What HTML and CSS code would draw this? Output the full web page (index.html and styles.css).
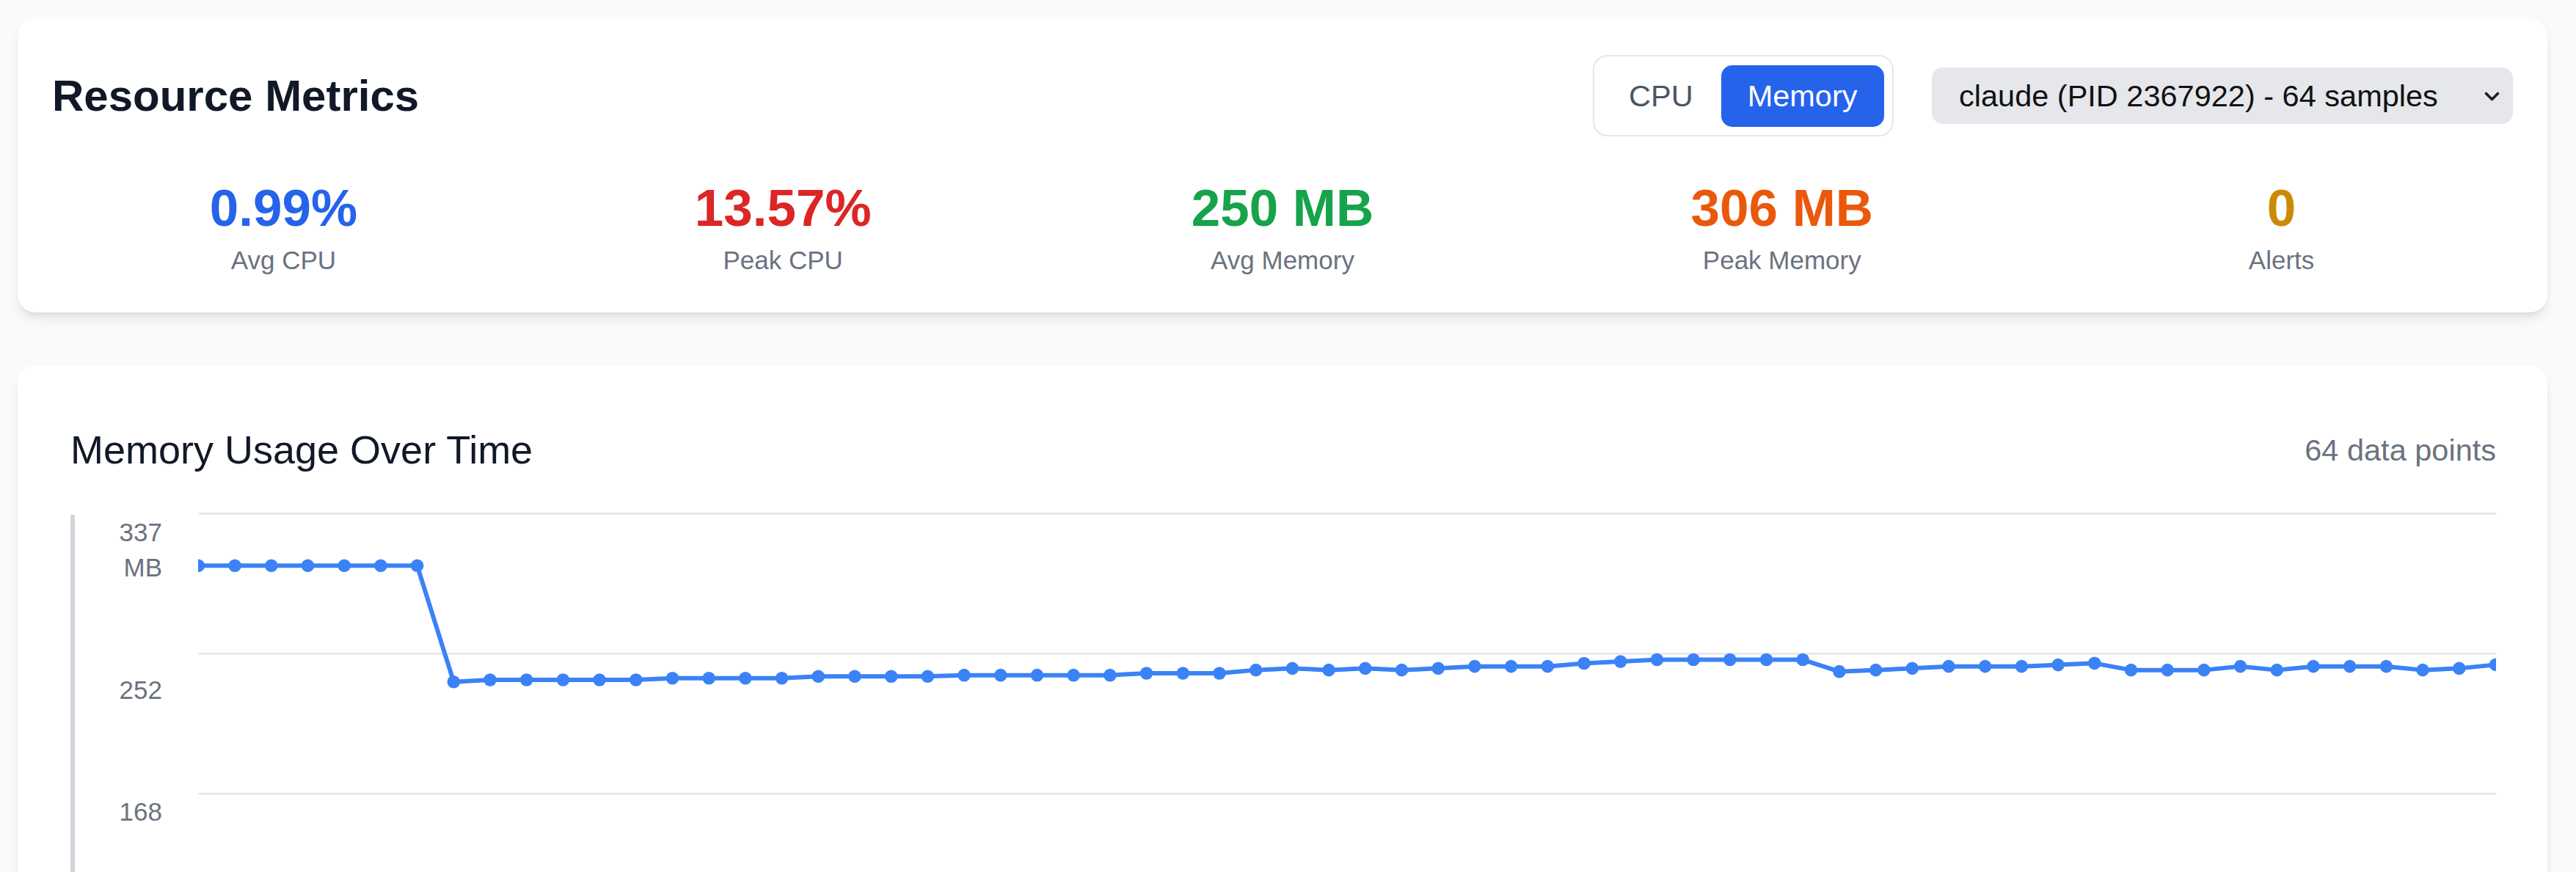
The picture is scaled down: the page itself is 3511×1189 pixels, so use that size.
FILE: index.html
```html
<!DOCTYPE html>
<html lang="en">

<head>
  <meta charset="UTF-8">
  <meta name="viewport" content="width=device-width, initial-scale=1.0">
  <title>Resource Metrics</title>
  <link rel="stylesheet" href="styles.css">
</head>

<body>
  <div class="page">
    <section class="card metrics-card">
      <div class="metrics-head">
        <h1 class="metrics-title">Resource Metrics</h1>
        <div class="controls">
          <div class="toggle">
            <button>CPU</button>
            <button class="active">Memory</button>
          </div>
          <div class="picker">
            <select>
              <option>claude (PID 2367922) - 64 samples</option>
            </select>
            <svg width="21" height="13" viewBox="0 0 21 13">
              <path d="M2.5 2.5 L10.5 10.5 L18.5 2.5" fill="none" stroke="#1f1f1f" stroke-width="3.6" stroke-linecap="round" stroke-linejoin="round" />
            </svg>
          </div>
        </div>
      </div>
      <div class="stats">
        <div class="stat">
          <div class="stat-value blue">0.99%</div>
          <div class="stat-label">Avg CPU</div>
        </div>
        <div class="stat">
          <div class="stat-value red">13.57%</div>
          <div class="stat-label">Peak CPU</div>
        </div>
        <div class="stat">
          <div class="stat-value green">250 MB</div>
          <div class="stat-label">Avg Memory</div>
        </div>
        <div class="stat">
          <div class="stat-value orange">306 MB</div>
          <div class="stat-label">Peak Memory</div>
        </div>
        <div class="stat">
          <div class="stat-value amber">0</div>
          <div class="stat-label">Alerts</div>
        </div>
      </div>
    </section>

    <section class="card chart-card">
      <div class="chart-head">
        <h2 class="chart-title">Memory Usage Over Time</h2>
        <span class="chart-count">64 data points</span>
      </div>
      <div class="chart-body">
        <div class="y-axis">
          <span>337 MB</span>
          <span>252</span>
          <span>168</span>
        </div>
        <svg class="plot" id="plot" width="3132" height="770"></svg>
      </div>
    </section>
  </div>

  <script>
    // memory samples in MB, one per sample
    const samples = [
      305.7, 305.7, 305.7, 305.7, 305.7, 305.7, 305.7,
      235.8, 237.0, 237.0, 237.0, 237.0, 237.0,
      238.0, 238.0, 238.0, 238.0,
      239.1, 239.1, 239.1, 239.1,
      239.8, 239.8, 239.8, 239.8, 239.8,
      241.0, 241.0, 241.0,
      242.9, 243.9, 242.9, 243.9, 242.9, 243.9,
      245.1, 245.1, 245.1, 246.9, 248.0,
      249.1, 249.1, 249.1, 249.1, 249.1,
      242.0, 242.9, 243.9, 245.1, 245.1, 245.1, 246.0, 247.0,
      242.9, 242.9, 242.9, 245.1, 242.9,
      245.1, 245.1, 245.1, 242.9, 243.9, 246.1
    ]
    const ns = 'http://www.w3.org/2000/svg'
    const plot = document.getElementById('plot')
    const maxMb = 337
    const padTop = 2.3
    const rowH = 191
    const stepX = 49.7
    const yOf = v => padTop + (maxMb - v) / (maxMb / 4) * rowH
    const xOf = i => 0.4 + i * stepX

    for (let i = 0; i <= 4; i++) {
      const line = document.createElementNS(ns, 'line')
      const y = padTop + i * rowH
      line.setAttribute('x1', 0)
      line.setAttribute('x2', 3132)
      line.setAttribute('y1', y)
      line.setAttribute('y2', y)
      line.setAttribute('class', 'grid')
      plot.appendChild(line)
    }

    const path = document.createElementNS(ns, 'polyline')
    path.setAttribute('points', samples.map((v, i) => `${xOf(i)},${yOf(v)}`).join(' '))
    path.setAttribute('class', 'series')
    plot.appendChild(path)

    samples.forEach((v, i) => {
      const dot = document.createElementNS(ns, 'circle')
      dot.setAttribute('cx', xOf(i))
      dot.setAttribute('cy', yOf(v))
      dot.setAttribute('r', 8.8)
      dot.setAttribute('class', 'dot')
      plot.appendChild(dot)
    })
  </script>
</body>

</html>
```

FILE: styles.css
```css
* {
  box-sizing: border-box;
}

body {
  margin: 0;
  background-color: #f9fafb;
  font-family: "Liberation Sans", Arial, sans-serif;
  color: #111827;
}

.page {
  padding: 26px 39px 0 24px;
}

.card {
  background-color: #fff;
  border-radius: 24px;
  box-shadow: 0 10px 15px -3px rgba(0, 0, 0, .1), 0 4px 6px -4px rgba(0, 0, 0, .1);
}

/* top card */
.metrics-card {
  padding: 49px 47px 47px 47px;
}

.metrics-head {
  display: flex;
  align-items: center;
  justify-content: space-between;
}

.metrics-title {
  margin: 0;
  font-size: 60px;
  font-weight: 700;
  line-height: 72px;
}

.controls {
  display: flex;
  align-items: center;
  gap: 52px;
}

.toggle {
  display: flex;
  gap: 2px;
  padding: 11.5px;
  border: 2.5px solid #e5e7eb;
  border-radius: 20px;
  background-color: #fff;
}

.toggle button {
  font-family: inherit;
  font-size: 41.5px;
  line-height: 60px;
  padding: 12px 36px;
  border: 0;
  border-radius: 15px;
  background: transparent;
  color: #4b5563;
}

.toggle .active {
  background-color: #2563eb;
  color: #fff;
}

.picker {
  position: relative;
}

.picker select {
  display: block;
  appearance: none;
  -webkit-appearance: none;
  width: 792px;
  height: 77px;
  padding: 0 90px 0 37px;
  font-family: inherit;
  font-size: 41.5px;
  color: #111;
  background-color: #e5e7eb;
  border: 0;
  border-radius: 15px;
}

.picker svg {
  position: absolute;
  right: 18px;
  top: 33px;
  pointer-events: none;
}

.stats {
  display: grid;
  grid-template-columns: repeat(5, 1fr);
  gap: 50px;
  margin-top: 55px;
  text-align: center;
}

.stat-value {
  font-size: 71px;
  font-weight: 700;
  line-height: 85px;
}

.stat-label {
  margin-top: 5px;
  font-size: 35px;
  line-height: 48px;
  color: #6b7280;
}

.blue { color: #2563eb; }
.red { color: #dc2626; }
.green { color: #16a34a; }
.orange { color: #ea580c; }
.amber { color: #ca8a04; }

/* chart card */
.chart-card {
  margin-top: 72px;
  padding: 76px 70px 72px 72px;
}

.chart-head {
  display: flex;
  align-items: center;
  justify-content: space-between;
}

.chart-title {
  margin: 0;
  font-size: 54px;
  font-weight: 400;
  line-height: 79.5px;
}

.chart-count {
  font-size: 41.5px;
  line-height: 1.5;
  color: #6b7280;
}

.chart-body {
  display: flex;
  align-items: flex-start;
  margin-top: 44.5px;
}

.y-axis {
  display: flex;
  flex-direction: column;
  gap: 118.5px;
  height: 762px;
  margin-top: 4px;
  border-left: 6px solid #d1d5db;
}

.y-axis span {
  width: 112px;
  margin-left: 7px;
  text-align: right;
  font-size: 35px;
  line-height: 48px;
  color: #6b7280;
}

.plot {
  display: block;
  flex: none;
  margin-left: 49px;
  overflow: hidden;
}

.plot .grid {
  stroke: #e5e7eb;
  stroke-width: 2.7;
}

.plot .series {
  fill: none;
  stroke: #3b82f6;
  stroke-width: 6;
  stroke-linejoin: round;
}

.plot .dot {
  fill: #3b82f6;
}
```
